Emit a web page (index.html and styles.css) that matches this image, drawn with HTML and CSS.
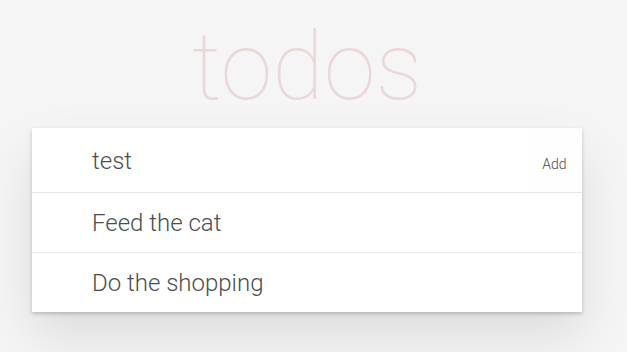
FILE: index.html
```html
<!DOCTYPE html>
<html lang="en">
<head>
<meta charset="utf-8">
<title>todos</title>
<link rel="stylesheet" href="styles.css">
</head>
<body>
<section class="app">
  <h1 class="title">todos</h1>
  <div class="card">
    <header class="new-row">
      <input class="new-todo" type="text" value="test">
      <button class="add-btn" type="button">Add</button>
    </header>
    <ul class="todo-list">
      <li class="todo-item">Feed the cat</li>
      <li class="todo-item">Do the shopping</li>
    </ul>
  </div>
</section>
</body>
</html>
```
FILE: styles.css
```css
html, body {
  margin: 0;
  padding: 0;
}
body {
  background: #f5f5f5;
  font-family: Roboto, "Liberation Sans", Arial, sans-serif;
  font-weight: 300;
  color: #4d4d4d;
  width: 627px;
  height: 352px;
  overflow: hidden;
}
.app {
  width: 550px;
  margin-left: 32px;
  padding-top: 17px;
}
.title {
  margin: 0 0 11px 0;
  height: 100px;
  line-height: 100px;
  font-family: Roboto, "Liberation Sans", sans-serif;
  font-weight: 100;
  font-size: 94px;
  text-align: center;
  color: rgba(175, 47, 47, 0.15);
}
.card {
  background: #fff;
  box-shadow: 0 2px 4px 0 rgba(0, 0, 0, 0.2), 0 25px 50px 0 rgba(0, 0, 0, 0.1);
}
.new-row {
  display: flex;
  height: 64px;
  border-bottom: 1px solid #e6e6e6;
}
.new-todo {
  flex: 1;
  min-width: 0;
  border: none;
  outline: none;
  background: #fff;
  padding: 2px 16px 0 60px;
  margin: 0;
  font-family: Roboto, "Liberation Sans", Arial, sans-serif;
  font-weight: 300;
  font-size: 24px;
  color: #4d4d4d;
}
.add-btn {
  width: 55px;
  border: none;
  margin: 0 0 2px 0;
  padding: 10px 0 0 0;
  background: #fefefe;
  font-family: Roboto, "Liberation Sans", Arial, sans-serif;
  font-weight: 300;
  font-size: 14px;
  color: #4d4d4d;
}
.todo-list {
  list-style: none;
  margin: 0;
  padding: 0;
}
.todo-item {
  height: 59px;
  line-height: 60px;
  padding-left: 60px;
  font-size: 24px;
  border-bottom: 1px solid #ededed;
}
.todo-item:last-child {
  border-bottom: none;
}
```
